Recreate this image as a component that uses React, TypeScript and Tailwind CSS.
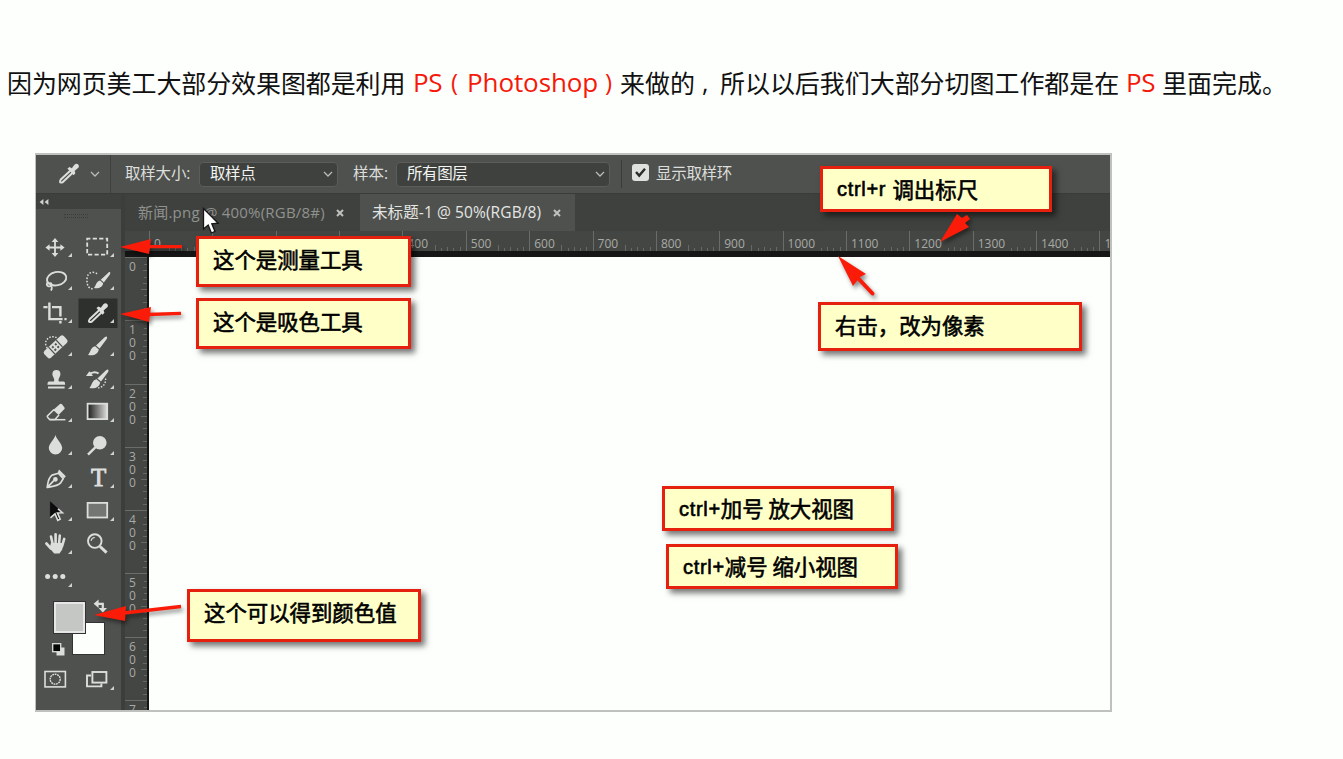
import React from "react";

const INK = "#dcdedb";

type ToolDef = { name: string; art: React.ReactNode; corner?: boolean; active?: boolean };

function Brush() {
  return (
    <g fill={INK}>
      <path d="M9.8 -9.8 C10.6 -9 9.8 -7.6 9 -6.4 L2.6 2 L-1 -1 L6.6 -8.2 C8 -9.6 9.2 -10.4 9.8 -9.8Z" />
      <path d="M-1.8 -0.2 L1.8 2.9 C1 7.5 -3.4 9.6 -9 8.4 C-6.6 6.6 -6.4 0.4 -1.8 -0.2Z" />
    </g>
  );
}

function Eyedropper() {
  return (
    <g>
      <path d="M2.2 -3.2 L-7.2 5.6 Q-9.6 9.6 -5.4 8.2 L4.4 -1" fill="none" stroke={INK} strokeWidth="2" strokeLinejoin="round" />
      <path d="M-0.6 -5.4 L1.6 -7 L3.8 -5.8 L6.4 -9.2 Q8.6 -11.4 10.4 -9.2 Q11.8 -7.2 9.4 -5.4 L6.6 -3 L7.4 -0.8 L5.6 1.2Z" fill={INK} />
    </g>
  );
}

const tools: ToolDef[] = [
  {
    name: "move",
    art: (
      <g fill={INK}>
        <path d="M-0.9 -6h1.8V-0.9H6v1.8H0.9V6h-1.8V0.9H-6v-1.8h5.1Z" />
        <path d="M0 -9.6 L3.3 -5.4 H-3.3Z M0 9.6 L3.3 5.4 H-3.3Z M-9.6 0 L-5.4 -3.3 V3.3Z M9.6 0 L5.4 -3.3 V3.3Z" />
      </g>
    ),
  },
  {
    name: "marquee",
    art: <rect x="-9.8" y="-8.8" width="20" height="16" fill="none" stroke={INK} strokeWidth="1.8" strokeDasharray="4.2 2.3" strokeDashoffset="1" />,
  },
  {
    name: "lasso",
    art: (
      <g fill="none" stroke={INK} strokeWidth="1.8">
        <ellipse cx="1.6" cy="-1.8" rx="9.8" ry="6.6" transform="rotate(-12 1.6 -1.8)" />
        <path d="M-6.4 1.6 C-9.6 3.6 -8 6.6 -4.8 5.6 C-2 4.4 -4 1.6 -6.2 3.2 M-4.4 5 C-2.6 6.4 -3 8.8 -4.2 10" />
      </g>
    ),
  },
  {
    name: "quick select",
    art: (
      <g>
        <path d="M0 -6.6 C-3 -9.6 -9.6 -8.6 -10 -2 C-10.4 5 -8.4 9 -2.6 8.2" fill="none" stroke={INK} strokeWidth="1.5" strokeDasharray="1.6 1.6" />
        <g transform="translate(4.6 0.2) scale(.86)"><Brush /></g>
      </g>
    ),
  },
  {
    name: "crop",
    art: (
      <g fill="none" stroke={INK} strokeWidth="2.4">
        <path d="M-5.6 -11 V5.6 H7.6 M-11.6 -6.4 H-7.4 M-3 -6.4 H5.4 V3 M5.4 7.6 V10 M9.4 5.6 H11.6" />
      </g>
    ),
  },
  { name: "eyedropper", art: <Eyedropper />, active: true },
  {
    name: "healing",
    art: (
      <g>
        <path d="M1.6 -8.8 C-3 -11.4 -9.6 -8.6 -9.4 -2.6 Q-9 0.4 -7.4 1.8" fill="none" stroke={INK} strokeWidth="1.4" strokeDasharray="1.5 1.5" />
        <g transform="rotate(-43)">
          <rect x="-13" y="-4" width="26.5" height="9.4" rx="2.4" fill={INK} />
          <path d="M-5.2 -4V5.4 M5.2 -4V5.4" stroke="#50524f" strokeWidth="1.2" />
          <g fill="#50524f"><rect x="-3" y="-2" width="2" height="2" /><rect x="1" y="-2" width="2" height="2" /><rect x="-3" y="1.6" width="2" height="2" /><rect x="1" y="1.6" width="2" height="2" /></g>
        </g>
      </g>
    ),
  },
  { name: "brush", art: <Brush /> },
  {
    name: "stamp",
    art: (
      <g fill={INK}>
        <path d="M-1 2 C0.2 -1 -2.8 -3 -2.6 -5.6 A4 4 0 0 1 5.4 -5.6 C5.6 -3 2.8 -1 3.8 2 H9 Q10.2 2.4 10.2 5.2 H-7.6 Q-7.6 2.4 -6.2 2Z" />
        <rect x="-7" y="7" width="16.6" height="2" />
      </g>
    ),
  },
  {
    name: "history brush",
    art: (
      <g>
        <g transform="translate(1.4 0)"><Brush /></g>
        <path d="M-11 -3.4 L-7.6 -8.2 L-4 -3.4Z" fill={INK} />
        <path d="M-7 -5.8 Q-2 -8.8 1.6 -6" fill="none" stroke={INK} strokeWidth="2" />
        <path d="M8.6 -1 C9 4 6 8 1 8.4" fill="none" stroke={INK} strokeWidth="1.4" strokeDasharray="1.5 1.5" />
      </g>
    ),
  },
  {
    name: "eraser",
    art: (
      <g>
        <path d="M-1.8 -2.4 L5 -8.6 Q6 -9.2 7 -8.2 L9.6 -4.8 Q10 -4 9.2 -3.2 L3.6 2.6Z" fill={INK} />
        <path d="M-1 -3 L-7.6 3.4 Q-8 4.2 -7.2 5 L-5.4 7 H0 L4 2.4" fill="none" stroke={INK} strokeWidth="1.6" />
        <path d="M-5.4 7.2 H10.4" stroke={INK} strokeWidth="1.5" />
      </g>
    ),
  },
  {
    name: "gradient",
    art: (
      <g>
        <defs>
          <linearGradient id="ramp"><stop offset="0" stopColor="#1c1d1b" /><stop offset="1" stopColor="#dddedc" /></linearGradient>
        </defs>
        <rect x="-9.4" y="-8.8" width="19.6" height="15.4" fill="url(#ramp)" stroke={INK} strokeWidth="1.8" />
      </g>
    ),
  },
  { name: "blur", art: <path d="M0.4 -10.6 C1.4 -6.4 7.2 -2 7.2 2.6 A6.6 6.2 0 0 1 -6.2 2.6 C-6.2 -2 -0.6 -6 0.4 -10.6Z" fill={INK} /> },
  {
    name: "dodge",
    art: (
      <g><circle cx="2.8" cy="-2.8" r="6.8" fill={INK} /><path d="M-1.4 1.6 L-9 9.2" stroke={INK} strokeWidth="2.4" /></g>
    ),
  },
  {
    name: "pen",
    art: (
      <g fill="none" stroke={INK} strokeWidth="1.7" strokeLinejoin="round">
        <path d="M-7.8 9 C-7 5 -7.4 0 -3 -3.4 L3.4 -5.2 L8.2 0.2 L5.6 4.4 C2 8.4 -3.4 7.6 -7.8 9Z M-7.4 8.6 L-1 1.8" />
        <circle cx="0.4" cy="0.8" r="1.5" fill={INK} />
        <path d="M4 -9 L10.8 -2.2 L9 0 L2.8 -6Z" fill={INK} stroke="none" />
      </g>
    ),
  },
  {
    name: "type",
    art: (
      <text x="1.6" y="7.6" textAnchor="middle" className="fill-[#dcdedb] stroke-[#dcdedb] font-['Liberation_Serif',serif] text-[25px] [stroke-width:0.9px]">T</text>
    ),
  },
  {
    name: "path select",
    art: (
      <g>
        <path d="M-4.6 -9.6 L7.4 1.2 L2.4 1.6 L5.4 7.6 L2.8 8.8 L0 2.8 L-4.6 6.4Z" fill="#0c0c0c" stroke="#0c0c0c" strokeWidth=".8" />
        <path d="M-4.6 6.4 L0 2.4 L2.8 8.8 L5.2 7.6 L2.4 1.4 L7.4 1.2 L3 -2.6" fill="none" stroke={INK} strokeWidth="1.6" />
      </g>
    ),
  },
  { name: "shape", art: <rect x="-9.4" y="-8.6" width="19.6" height="14.6" fill="#747673" stroke={INK} strokeWidth="1.8" /> },
  {
    name: "hand",
    art: (
      <g fill="none" stroke={INK} strokeLinecap="round" strokeWidth="2.6">
        <path d="M-4 -8 L-2.2 0 M0.6 -10.2 V0 M4.8 -9 L4 0 M9.2 -5.6 L7 2 M-8.6 -1 L-4 4" />
        <path d="M-3.4 -0.6 H7 L6.4 4.6 L4 8 H-0.4 L-4.4 3.6Z" fill={INK} strokeWidth="1.8" />
      </g>
    ),
  },
  {
    name: "zoom",
    corner: false,
    art: (
      <g fill="none" stroke={INK}>
        <circle cx="-2.2" cy="-3.4" r="6.8" strokeWidth="1.9" />
        <path d="M-6 -3.6 Q-5.4 -6.8 -2.2 -7" strokeWidth="1.1" />
        <path d="M3 2 L9.6 8.2" strokeWidth="3" />
      </g>
    ),
  },
  { name: "more", art: <g fill={INK}><circle cx="-7.4" cy="-1" r="2.5" /><circle cx="0.2" cy="-1" r="2.5" /><circle cx="7.8" cy="-1" r="2.5" /></g> },
];

function ToolCell({ tool }: { tool: ToolDef }) {
  return (
    <div className="flex h-[33px] w-[42px] items-center justify-center">
      <svg viewBox="-21 -16.5 42 33" className="h-[33px] w-[42px]">
        {tool.active && <rect x="-18.5" y="-15" width="39" height="29.5" fill="#2e302d" />}
        {tool.art}
        {tool.corner !== false && <path d="M17 5.4 V9.4 H13Z" fill="#d0d2cf" />}
      </svg>
    </div>
  );
}

function Swatches() {
  return (
    <svg viewBox="36 592 84 104" className="h-[104px] w-[84px]">
      <rect x="72.5" y="622.5" width="32" height="32" fill="#fdfffd" stroke="#333" />
      <rect x="53.5" y="601.5" width="32" height="32" fill="#c5c7c5" stroke="#333" />
      <rect x="55" y="603" width="29" height="29" fill="none" stroke="#eee" strokeWidth="1.6" />
      <path d="M98 603.8 H102.8 V609" fill="none" stroke={INK} strokeWidth="2.2" />
      <path d="M98.6 599.6 V608 L93.6 603.8Z M98.6 608 H107 L102.8 612.6Z" fill={INK} />
      <rect x="56.5" y="647.5" width="8" height="8" fill={INK} />
      <rect x="52.7" y="643.7" width="8" height="8" fill="#050505" stroke={INK} strokeWidth="1.3" />
      <g fill="none" stroke={INK} strokeWidth="1.6">
        <rect x="45" y="671.5" width="20.4" height="15.4" />
        <circle cx="55.2" cy="679.2" r="5" strokeDasharray="1.8 .7" strokeWidth="1.4" />
        <path d="M91 675.5 H87 V686.4 H101.4 V683.6" strokeWidth="1.9" />
        <rect x="92.4" y="672" width="14" height="10.6" strokeWidth="1.9" />
      </g>
      <path d="M114 686 V690 H110Z" fill="#d0d2cf" />
    </svg>
  );
}

function Chevron() {
  return (
    <svg viewBox="0 0 10 6" className="h-1.5 w-2.5 shrink-0"><path d="M1 1 L5 5 L9 1" fill="none" stroke="#b9bbb8" strokeWidth="1.3" /></svg>
  );
}

function Select({ label, width }: { label: string; width: string }) {
  return (
    <div className={`flex h-[25px] items-center justify-between rounded-sm border border-[#5b5d5a] bg-[#3f413e] pr-1 pl-2.5 text-[#f2f4f1] ${width}`}>
      <span className="text-[15.5px] tracking-[-0.4px]">{label}</span>
      <Chevron />
    </div>
  );
}

function Close() {
  return (
    <svg viewBox="0 0 8 8" className="size-2 shrink-0"><path d="M1 1 L7 7 M7 1 L1 7" stroke="#bfc1be" strokeWidth="2" /></svg>
  );
}

const tickHeights = ["h-0", "h-[3px]", "h-[4px]", "h-[3px]", "h-[4px]", "h-[6px]", "h-[3px]", "h-[4px]", "h-[3px]", "h-[4px]"];
const tickWidths = ["w-0", "w-[3px]", "w-[4px]", "w-[3px]", "w-[4px]", "w-[6px]", "w-[3px]", "w-[4px]", "w-[3px]", "w-[4px]"];

// The marks 100 to 300 lie under the first note, so they carry no number.
const topLabels = ["0", "", "", "", "400", "500", "600", "700", "800", "900", "1000", "1100", "1200", "1300", "1400", "1"];
const leftLabels = ["0", "100", "200", "300", "400", "500", "600", "7"];

function TopRuler() {
  return (
    <div className="flex h-[26px] overflow-hidden border-b-[6px] border-[#151615] bg-[#444643] pl-6">
      {topLabels.map((label, i) => (
        <div key={i} className="relative flex w-[63.37px] shrink-0 items-end justify-between border-l border-[#6a6c69]">
          {tickHeights.map((h, k) => <i key={k} className={`w-px bg-[#666865] ${h}`} />)}
          <i className="w-0" />
          {label && <span className="absolute top-[6px] left-1 bg-[#444643] pr-0.5 text-[12px] leading-[14px] text-[#a8aaa6]">{label}</span>}
        </div>
      ))}
    </div>
  );
}

function LeftRuler() {
  return (
    <div className="flex w-[24px] shrink-0 flex-col overflow-hidden border-r-2 border-[#151615] bg-[#444643]">
      {leftLabels.map((label, i) => (
        <div key={i} className="relative flex h-[63.3px] shrink-0 flex-col items-end justify-between border-t border-[#6a6c69]">
          {tickWidths.map((w, k) => <i key={k} className={`h-px bg-[#666865] ${w}`} />)}
          <i className="h-0" />
          <span className="absolute top-0.5 left-1 flex flex-col text-[12px] leading-[13px] text-[#a8aaa6]">
            {label.split("").map((d, k) => <b key={k} className="font-normal">{d}</b>)}
          </span>
        </div>
      ))}
    </div>
  );
}

const notes = [
  { text: "这个是测量工具", box: "left-[196px] top-[236px] w-[215px] h-[51px] pb-1" },
  { text: "这个是吸色工具", box: "left-[196px] top-[298px] w-[215px] h-[51px] pb-1" },
  { latin: "ctrl+r ", text: "调出标尺", box: "left-[820px] top-[166px] w-[232px] h-[46px]" },
  { text: "右击，改为像素", box: "left-[818px] top-[302px] w-[264px] h-[49px] pb-0.5" },
  { latin: "ctrl+", text: "加号 放大视图", box: "left-[662px] top-[486px] w-[232px] h-[45px]" },
  { latin: "ctrl+", text: "减号 缩小视图", box: "left-[666px] top-[544px] w-[232px] h-[45px]" },
  { text: "这个可以得到颜色值", box: "left-[187px] top-[589px] w-[234px] h-[53px] pb-1.5" },
];

export default function App() {
  return (
    <main className="relative flex h-[759px] w-[1343px] flex-col overflow-hidden bg-[#fdfffd] font-['Open_Sans','Noto_Sans_CJK_SC',sans-serif]">
      <p className="flex h-[153px] shrink-0 items-start pt-[63px] pl-[7px] text-[25px] leading-[38px] whitespace-pre text-[#111]">
        <span className="w-[406px] font-['Noto_Sans_CJK_SC',sans-serif] tracking-[-0.1px]">因为网页美工大部分效果图都是利用</span>
        <span className="w-[38px] text-[26px] tracking-[-0.3px] text-[#f5190a]">PS</span>
        <span className="w-[16px] text-[24px] text-[#f5190a]">(</span>
        <span className="w-[138px] text-[26px] tracking-[-0.1px] text-[#f5190a]">Photoshop</span>
        <span className="w-[15px] text-[24px] text-[#f5190a]">)</span>
        <span className="w-[82px] font-['Noto_Sans_CJK_SC',sans-serif]">来做的</span>
        <span className="w-[18px]">,</span>
        <span className="w-[406px] font-['Noto_Sans_CJK_SC',sans-serif] tracking-[-0.05px]">所以以后我们大部分切图工作都是在</span>
        <span className="w-[36px] text-[26px] tracking-[-0.3px] text-[#f5190a]">PS</span>
        <span className="font-['Noto_Sans_CJK_SC',sans-serif]">里面完成。</span>
      </p>

      <section className="ml-[35px] flex h-[559px] w-[1077px] shrink-0 flex-col border-2 border-l border-[#bfc1bf] bg-[#4f514e]">
        <header className="flex h-[39px] shrink-0 items-center border-b border-[#3a3c39] text-[15.5px] text-[#dcdedb]">
          <div className="flex h-full w-[75px] items-center border-r border-[#3e403d] pl-5">
            <svg viewBox="-12 -12 24 24" className="size-6"><Eyedropper /></svg>
            <span className="ml-2.5 flex"><Chevron /></span>
          </div>
          <span className="ml-[14px] w-[74px] tracking-[-0.2px]">取样大小:</span>
          <Select label="取样点" width="w-[139px]" />
          <span className="ml-[15px] w-[43px]">样本:</span>
          <Select label="所有图层" width="w-[214px]" />
          <div className="ml-[11px] h-[28px] w-[11px] border-l border-[#3a3c39]" />
          <svg viewBox="0 0 17 17" className="-mt-1 size-[17px]">
            <rect width="17" height="17" rx="3" fill="#dfe1de" />
            <path d="M4 8 L7.2 11.6 L13 4.8" fill="none" stroke="#2c2d2b" strokeWidth="2.4" />
          </svg>
          <span className="ml-[7px] tracking-[-0.3px]">显示取样环</span>
        </header>

        <div className="flex min-h-0 flex-1">
          <aside className="flex w-[85px] shrink-0 flex-col">
            <div className="flex h-[15px] items-center bg-[#3f413e] pl-[3px]">
              <svg viewBox="0 0 10 6" className="h-1.5 w-2.5"><path d="M4.4 0 V6 L0.6 3Z M9.4 0 V6 L5.6 3Z" fill="#d0d2cf" /></svg>
            </div>
            <div className="flex h-[21.5px] justify-center pt-[5px]"><div className="-ml-1.5 h-1 w-6 border-y border-dotted border-[#3b3d3a]" /></div>
            <div className="ml-[-2px] grid grid-cols-[42px_42px]">
              {tools.map((t) => <ToolCell key={t.name} tool={t} />)}
            </div>
            <div className="mt-[-1.5px]"><Swatches /></div>
          </aside>

          <div className="flex min-w-0 flex-1 flex-col border-l-[4px] border-[#3c3e3b]">
            <nav className="flex h-[37px] shrink-0 items-stretch bg-[#3f413e] text-[15px]">
              <div className="flex w-[235px] items-center pl-[13px] text-[#90928f]">
                <span className="w-[198px] tracking-[0.22px] whitespace-nowrap">新闻.png @ 400%(RGB/8#)</span>
                <Close />
              </div>
              <div className="flex w-[215px] items-center bg-[#4f514e] pl-[12px] text-[#e4e6e3]">
                <span className="w-[181px] text-[15.5px] tracking-[0.1px] whitespace-nowrap">未标题-1 @ 50%(RGB/8)</span>
                <Close />
              </div>
            </nav>
            <TopRuler />
            <div className="flex min-h-0 flex-1">
              <LeftRuler />
              <div className="flex-1 bg-[#fdfffd]" />
            </div>
          </div>
        </div>
      </section>

      {notes.map((n) => (
        <div key={n.text} className={`absolute flex items-center border-[3px] border-[#e6200f] bg-[#ffffc8] pl-[14px] text-[21.4px] whitespace-pre text-black shadow-[4px_4px_6px_rgba(0,0,0,0.55)] ${n.box}`}>
          {n.latin && <span className="font-['Liberation_Sans',sans-serif] text-[20px] [-webkit-text-stroke:0.6px_black] tracking-[0.7px]">{n.latin}</span>}
          <span className="font-['Noto_Sans_CJK_SC',sans-serif] [-webkit-text-stroke:0.6px_black]">{n.text}</span>
        </div>
      ))}

      <svg viewBox="0 0 1343 759" className="pointer-events-none absolute inset-0 h-[759px] w-[1343px] drop-shadow-[2px_3px_2px_rgba(0,0,0,0.45)]">
        <g fill="#fa1c08" stroke="#fa1c08">
          <path d="M120 247 L151 239 L149 254Z M120 314 L151 307 L149 322Z M94 615 L126 606 L125 621Z" stroke="none" />
          <path d="M940 242 L957 214 L962 218 L967 215 L970 219 L965 223 L969 227Z M838 256 L866 274 L860 277 L853 286Z" stroke="none" />
          <path d="M148 246.6 H182 M148 314.5 L181 313.4 M124 613 L181 606.5" strokeWidth="3.4" />
          <path d="M856 276 L872.5 293.5" strokeWidth="4" strokeLinecap="round" />
        </g>
      </svg>
      <svg viewBox="0 0 18 28" className="absolute top-[207px] left-[202px] h-[28px] w-[18px]">
        <path d="M1.5 1.5 V22 L6.2 18 L9.4 26 L13 24.4 L9.8 16.8 L16.2 16.2Z" fill="#fff" stroke="#151515" strokeWidth="1.3" />
      </svg>
    </main>
  );
}
